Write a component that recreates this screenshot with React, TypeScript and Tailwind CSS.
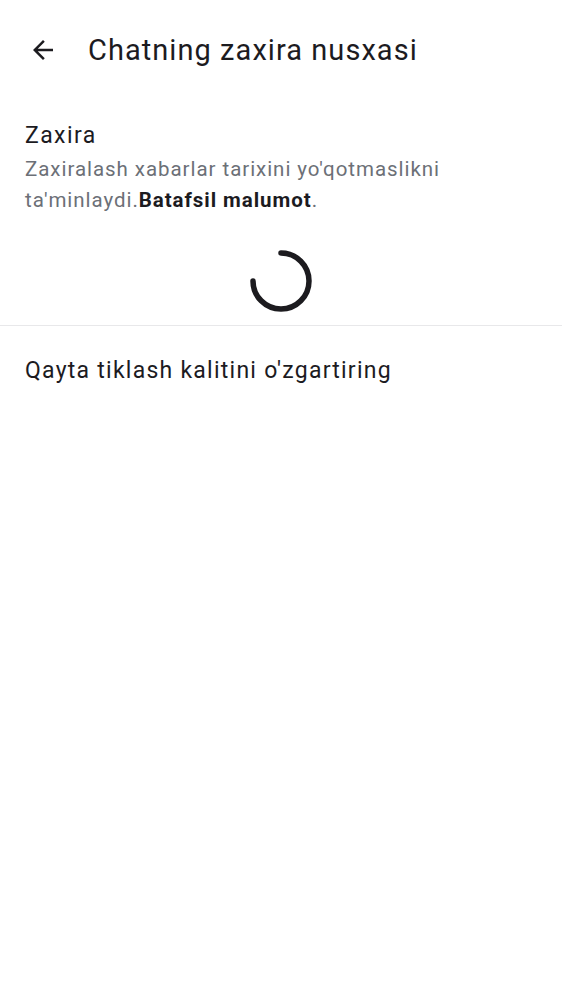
const App: React.FC = () => {
  return (
    <div className="min-h-screen w-[562px] bg-white text-[#1c1b1f] [font-family:Roboto,'Liberation_Sans',sans-serif]">
      {/* top bar */}
      <div className="flex h-[100px] items-center">
        <button className="ml-[27px] flex h-8 w-8 items-center justify-center">
          <svg viewBox="0 0 24 24" className="h-[30px] w-[30px]" fill="#1c1b1f">
            <path d="M20 11H7.83l5.59-5.59L12 4l-8 8 8 8 1.41-1.41L7.83 13H20v-2z" />
          </svg>
        </button>
        <h1 className="ml-[29px] text-[29px] leading-none tracking-[1.05px]">Chatning zaxira nusxasi</h1>
      </div>

      {/* backup section */}
      <div className="px-[25px] pt-[21px]">
        <div className="text-[23px] leading-[30px] tracking-[1.4px]">Zaxira</div>
        <p className="mt-[3px] text-[20.5px] leading-[31px] tracking-[0.95px] text-[#6c7077]">
          Zaxiralash xabarlar tarixini yo'qotmaslikni
          <br />
          ta'minlaydi.<span className="font-bold text-[#1c1b1f]">Batafsil malumot</span>.
        </p>
      </div>

      <div className="flex justify-center pb-[12px] pt-[33px]">
        <svg viewBox="0 0 64 64" className="h-16 w-16">
          <path
            d="M32 4 A28 28 0 1 1 4 32"
            fill="none"
            stroke="#1c1b1f"
            strokeWidth="5.5"
            strokeLinecap="round"
          />
        </svg>
      </div>

      <div className="h-px bg-[#e8e8ea]" />

      <div className="px-[25px] pt-[30px] text-[23px] leading-[30px] tracking-[1.25px]">
        Qayta tiklash kalitini o'zgartiring
      </div>
    </div>
  );
};

export default App;
